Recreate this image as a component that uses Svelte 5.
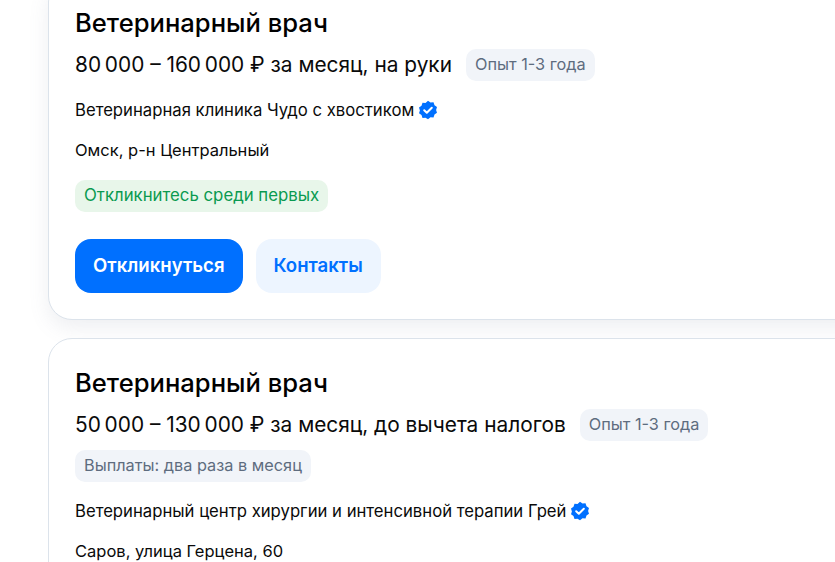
<script>
    const vacancies = [
        {
            title: 'Ветеринарный врач',
            salary: '80\u2009000 – 160\u2009000 ₽ за месяц, на руки',
            tags: ['Опыт 1-3 года'],
            company: 'Ветеринарная клиника Чудо с хвостиком',
            place: 'Омск, р-н Центральный',
            first: true,
            actions: true
        },
        {
            title: 'Ветеринарный врач',
            salary: '50\u2009000 – 130\u2009000 ₽ за месяц, до вычета налогов',
            tags: ['Опыт 1-3 года', 'Выплаты: два раза в месяц'],
            company: 'Ветеринарный центр хирургии и интенсивной терапии Грей',
            place: 'Саров, улица Герцена, 60'
        }
    ];
</script>

<div class="page">
    <div class="list">
        {#each vacancies as job}
            <article class="card" class:raised={job.actions}>
                <h2 class="title">{job.title}</h2>
                <div class="pay">
                    <span class="salary">{job.salary}</span>
                    {#each job.tags as tag}
                        <span class="chip">{tag}</span>
                    {/each}
                </div>
                <div class="company">
                    <span>{job.company}</span>
                    <svg class="check" viewBox="0 0 20 20" width="20" height="20" aria-hidden="true">
                        <path
                            fill="#0070ff"
                            d="M10 .8l2.5 1.7 3-.2 1 2.9 2.5 1.7-.9 3 .9 2.9-2.5 1.7-1 2.9-3-.1L10 19.2l-2.5-1.4-3 .1-1-2.9L1 13.3l.9-2.9-.9-3 2.5-1.7 1-2.9 3 .2z"
                        />
                        <path
                            d="M6.2 10.2l2.6 2.6 5-5"
                            fill="none"
                            stroke="#fff"
                            stroke-width="2"
                            stroke-linecap="round"
                            stroke-linejoin="round"
                        />
                    </svg>
                </div>
                <div class="place">{job.place}</div>
                {#if job.first}
                    <div class="early"><span>Откликнитесь среди первых</span></div>
                {/if}
                {#if job.actions}
                    <div class="actions">
                        <button class="btn primary">Откликнуться</button>
                        <button class="btn soft">Контакты</button>
                    </div>
                {/if}
            </article>
        {/each}
    </div>
</div>

<style>
    :global(body) {
        background: #fff;
    }
    .page {
        height: 562px;
        overflow: hidden;
        font-family: Inter, "Noto Sans", sans-serif;
        color: #0a0a0a;
    }
    .list {
        display: flex;
        flex-direction: column;
        gap: 18px;
        margin: -22px -40px 0 48px;
    }
    .card {
        border: 1px solid #dce3eb;
        border-radius: 24px;
        padding: 29px 26px 26px;
        background: #fff;
    }
    .card.raised {
        box-shadow: 0 8px 20px rgba(112, 127, 150, 0.12);
    }
    .title {
        margin: 0;
        font-size: 25.6px;
        line-height: 30px;
        font-weight: 550;
        color: #000;
    }
    .pay {
        display: flex;
        flex-wrap: wrap;
        align-items: center;
        gap: 9px 14px;
        margin-top: 11px;
        max-width: 640px;
    }
    .salary {
        font-size: 20.85px;
        line-height: 30px;
    }
    .chip {
        padding: 0 9px;
        height: 32px;
        line-height: 30px;
        border-radius: 10px;
        background: #f1f4f9;
        color: #5e6c7f;
        font-size: 16.3px;
    }
    .company {
        display: flex;
        align-items: center;
        gap: 4px;
        margin-top: 19px;
        font-size: 16.7px;
        line-height: 20px;
    }
    .check {
        display: block;
    }
    .place {
        margin-top: 20px;
        font-size: 16.5px;
        line-height: 20px;
    }
    .early {
        display: flex;
        margin-top: 20px;
    }
    .early span {
        padding: 0 9px;
        height: 32px;
        line-height: 31px;
        border-radius: 10px;
        background: #e8f6ea;
        color: #0a9a50;
        font-size: 16.8px;
    }
    .actions {
        display: flex;
        gap: 13px;
        margin-top: 27px;
    }
    .btn {
        height: 54px;
        border: 0;
        border-radius: 16px;
        padding: 0 18px 2px;
        font: 600 18.6px Inter, "Noto Sans", sans-serif;
    }
    .primary {
        background: #0070ff;
        color: #fff;
    }
    .soft {
        background: #edf5ff;
        color: #0070ff;
    }
</style>
